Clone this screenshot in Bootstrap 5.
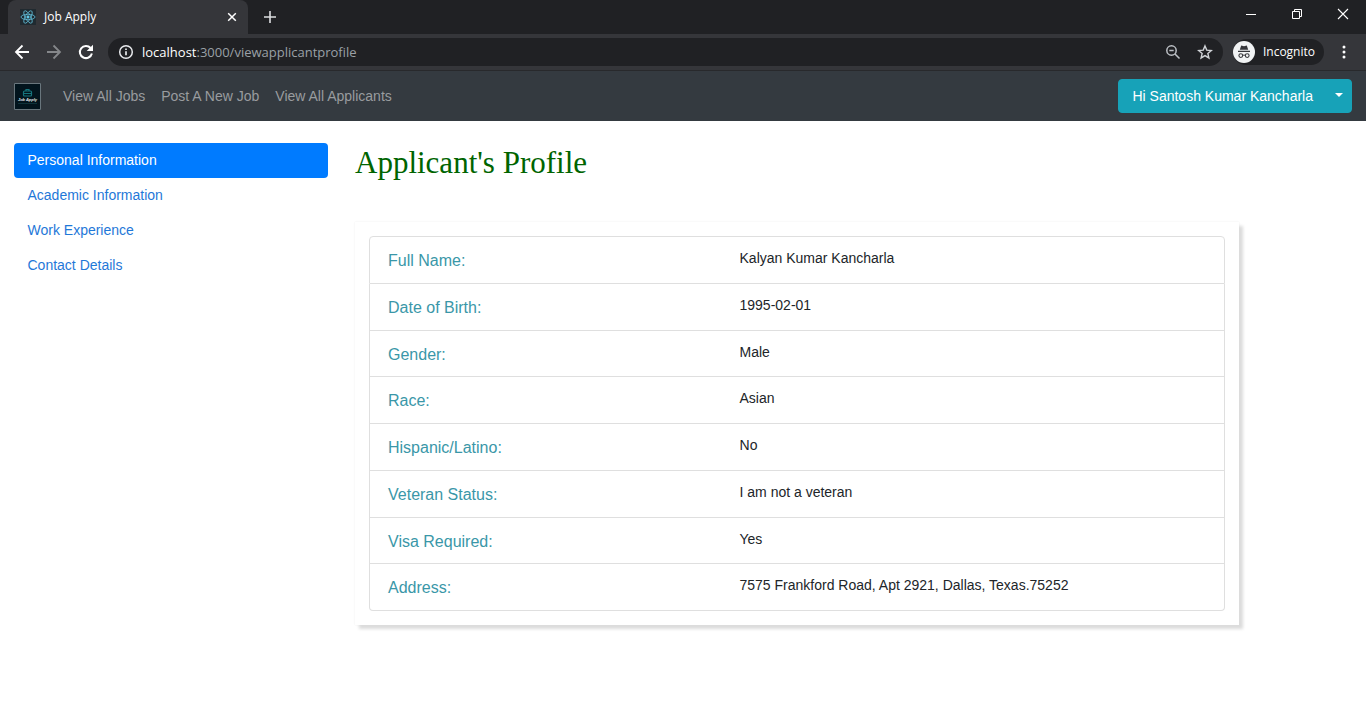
<!DOCTYPE html>
<html lang="en">
<head>
<meta charset="utf-8">
<meta name="viewport" content="width=device-width, initial-scale=1">
<title>Job Apply</title>
<link href="https://cdn.jsdelivr.net/npm/bootstrap@5.3.0/dist/css/bootstrap.min.css" rel="stylesheet">
<style>
  body { font-family: "Liberation Sans", Arial, sans-serif; font-size: 14px; line-height: 21px; color: #212529; background: #fff; }
  svg { display: block; flex: none; }
  .browser button { border: 0; background: none; padding: 0; color: inherit; }

  /* Browser window */
  .browser { font-family: "Open Sans", "Noto Sans", sans-serif; font-size: 12px; line-height: 16px; color: #fff; background: #35363a; border-bottom: 1px solid #28292c; }
  .tab-strip { height: 34px; background: #202124; padding-left: 8px; }
  .page-tab { width: 240px; height: 34px; background: #35363a; border-radius: 8px 8px 0 0; padding: 0 10px 0 12px; }
  .window-buttons { gap: 34px; padding-right: 17px; height: 28px; }
  .toolbar { height: 36px; padding: 0 20px 0 14px; }
  .nav-buttons { gap: 16px; width: 94px; }
  .address-bar { height: 28px; border-radius: 14px; background: #202124; padding: 0 10px; font-size: 13px; }
  .address-bar input { border: 0; outline: 0; background: none; color: #9aa0a6; padding: 0; min-width: 0; }
  .browser .incognito { height: 26px; border-radius: 13px; background: #202124; padding-right: 9px; margin: 0 18px 0 10px; gap: 8px; }

  /* Site navigation */
  .site-bar { --bs-navbar-padding-y: 8px; background: #343a40; min-height: 50px; }
  .site-bar .container-fluid { padding: 0 14px; }
  .site-bar .nav-link { color: #999c9f; padding: 0 8px; }
  .site-bar .navbar-nav { margin-left: 14px; }
  .user-menu { --bs-btn-color: #fff; --bs-btn-bg: #17a2b8; --bs-btn-border-color: #17a2b8; --bs-btn-hover-color: #fff; --bs-btn-hover-bg: #138496; --bs-btn-hover-border-color: #117a8b; --bs-btn-font-size: 14px; --bs-btn-line-height: 22px; --bs-btn-padding-y: 5px; --bs-btn-border-radius: 4px; }
  .user-name { --bs-btn-padding-x: 13px; }
  .user-menu.dropdown-toggle-split { padding: 0 8px; }

  /* Profile page */
  .profile-page { --bs-gutter-x: 27px; padding-bottom: 60px; }
  .profile-page > .row { --bs-gutter-x: 27px; padding-top: 22px; }
  .section-links { --bs-nav-pills-border-radius: 4px; --bs-nav-pills-link-active-bg: #007bff; --bs-nav-link-color: #1f78d8; --bs-nav-link-padding-x: 14px; --bs-nav-link-padding-y: 7px; --bs-nav-link-font-size: 14px; }
  h1 { font-family: Georgia, "Liberation Serif", serif; font-size: 31px; line-height: 40px; color: #006400; margin-bottom: 39px; font-weight: 400; }
  .profile-panel { padding: 14px; box-shadow: 4px 4px 3px #dcdcdc, 0 0 2px #eee; background: #fff; }
  .profile-list { --bs-list-group-border-radius: 4px; --bs-list-group-border-color: #dfdfdf; min-height: 375px; margin: 0; }
  .profile-list .list-group-item { padding: 12px 18px 9px; }
  .profile-list .row { --bs-gutter-x: 26px; }
  .profile-list dt { font-weight: 400; font-size: 16px; line-height: 24px; color: #3a97a8; }
  .profile-list dd { margin: 0; line-height: 19px; }
</style>
</head>
<body>
<header class="browser">
  <div class="tab-strip d-flex align-items-start">
    <div class="page-tab d-flex align-items-center">
      <svg width="16" height="16" viewBox="0 0 16 16" fill="none" stroke="#61bdd8" stroke-width=".8"><path fill="#202a30" stroke="none" d="M0 0h16v16H0z"/><ellipse cx="8" cy="8" rx="7" ry="2.7"/><ellipse cx="8" cy="8" rx="7" ry="2.7" transform="rotate(60 8 8)"/><ellipse cx="8" cy="8" rx="7" ry="2.7" transform="rotate(120 8 8)"/><circle cx="8" cy="8" r="1.2" fill="#61dafb"/></svg>
      <span class="ms-2">Job Apply</span>
      <button class="ms-auto" type="button" aria-label="Close tab"><svg width="12" height="12" viewBox="0 0 12 12" stroke="#fff" stroke-width="1.5"><path d="M2.200 2.200l7.600 7.600M9.800 2.200L2.200 9.800"/></svg></button>
    </div>
    <button class="align-self-center ms-3" type="button" aria-label="New tab"><svg width="12" height="12" viewBox="0 0 12 12" stroke="#dcdee0" stroke-width="1.6"><path d="M6 0v12M0 6h12"/></svg></button>
    <div class="window-buttons d-flex align-items-center ms-auto">
      <button type="button" aria-label="Minimize"><svg width="12" height="12" viewBox="0 0 12 12" stroke="#fff"><path d="M1 6.500h10"/></svg></button>
      <button type="button" aria-label="Restore"><svg width="12" height="12" viewBox="0 0 12 12" fill="none" stroke="#fff"><path d="M1.500 3.500h7v7h-7zM3.500 3.500v-2h7v7h-2"/></svg></button>
      <button type="button" aria-label="Close window"><svg width="12" height="12" viewBox="0 0 12 12" stroke="#fff" stroke-width="1.100"><path d="M1 1l10 10M11 1L1 11"/></svg></button>
    </div>
  </div>
  <div class="toolbar d-flex align-items-center">
    <div class="nav-buttons d-flex align-items-center flex-shrink-0">
      <button type="button" aria-label="Back"><svg width="16" height="16" viewBox="0 0 16 16" fill="none" stroke="#fff" stroke-width="1.800"><path d="M15 8H2.500M8.500 1.500L2 8l6.500 6.500"/></svg></button>
      <button type="button" aria-label="Forward"><svg width="16" height="16" viewBox="0 0 16 16" fill="none" stroke="#85878a" stroke-width="1.800"><path d="M1 8h13M7.500 1.500L14 8l-6.500 6.500"/></svg></button>
      <button type="button" aria-label="Reload"><svg width="16" height="16" viewBox="0 0 16 16" fill="none" stroke="#fff" stroke-width="2"><path d="M13.900 9.500A6.100 6.100 0 1 1 12.600 4"/><path d="M15 .8v6.300H8.700z" fill="#fff" stroke="none"/></svg></button>
    </div>
    <div class="address-bar d-flex align-items-center flex-fill">
      <svg class="me-2" width="16" height="16" viewBox="0 0 16 16" fill="none" stroke="#e8eaed" stroke-width="1.500"><circle cx="8" cy="8" r="6.300"/><path d="M8 7.200v4M8 4.400v1.500" stroke-width="1.700"/></svg>
      <label for="address">localhost</label>
      <input id="address" class="flex-fill" type="text" value=":3000/viewapplicantprofile">
      <button type="button" aria-label="Zoom"><svg width="16" height="16" viewBox="0 0 16 16" fill="none" stroke="#bdc1c6" stroke-width="1.500"><circle cx="6.500" cy="6.500" r="4.700"/><path d="M10 10l4.500 4.500M4.300 6.500h4.400"/></svg></button>
      <button class="ms-3" type="button" aria-label="Bookmark"><svg width="16" height="16" viewBox="0 0 16 16" fill="none" stroke="#d0d3d7" stroke-width="1.400"><path d="M8 1.900l1.750 4.200 4.550.4-3.450 3 1.050 4.450L8 11.600l-3.900 2.350 1.050-4.450-3.450-3 4.550-.4z"/></svg></button>
    </div>
    <button class="incognito d-flex align-items-center flex-shrink-0" type="button">
      <svg width="22" height="22" viewBox="0 0 22 22"><circle cx="11" cy="11" r="11" fill="#f1f3f4"/><path fill="#35363a" d="M8.200 4.500l2.800.7 2.800-.7 1.400 4.300H6.800zM5 9.800h12v1.200H5z"/><g fill="none" stroke="#35363a" stroke-width="1.100"><circle cx="7.800" cy="14.600" r="1.900"/><circle cx="14.200" cy="14.600" r="1.900"/><path d="M9.700 14.400q1.300-.8 2.600 0"/></g></svg>
      Incognito
    </button>
    <button type="button" aria-label="Browser menu"><svg width="4" height="16" viewBox="0 0 4 16" fill="#fff"><circle cx="2" cy="3" r="1.500"/><circle cx="2" cy="8" r="1.500"/><circle cx="2" cy="13" r="1.500"/></svg></button>
  </div>
</header>

<nav class="site-bar navbar navbar-expand">
  <div class="container-fluid">
    <a href="#" class="d-block" aria-label="Home"><svg width="27" height="27" viewBox="0 0 27 27"><path fill="#02141d" stroke="#69767d" stroke-width="1" d="M.5.500h26v26H.5z"/><g fill="none" stroke="#16747c" stroke-width="1.200"><rect x="9.500" y="8" width="8" height="5" rx="1"/><path d="M12 8V6.500h3V8M9.500 10.500h8"/></g><text x="13.500" y="17.500" text-anchor="middle" font-size="4" font-weight="700" font-style="italic" fill="#e6edef">Job Apply</text><path stroke="#17454d" stroke-width=".6" d="M4 20.500h19"/></svg></a>
    <ul class="navbar-nav me-auto">
      <li class="nav-item"><a class="nav-link" href="#">View All Jobs</a></li>
      <li class="nav-item"><a class="nav-link" href="#">Post A New Job</a></li>
      <li class="nav-item"><a class="nav-link" href="#">View All Applicants</a></li>
    </ul>
    <div class="btn-group">
      <button class="btn user-menu user-name" type="button">Hi Santosh Kumar Kancharla</button>
      <button class="btn user-menu dropdown-toggle dropdown-toggle-split" type="button" aria-label="Account menu"></button>
    </div>
  </div>
</nav>

<main class="profile-page container-fluid">
  <div class="row">
    <div class="col-3">
      <ul class="section-links nav nav-pills flex-column">
        <li class="nav-item"><a class="nav-link active" href="#" aria-current="page">Personal Information</a></li>
        <li class="nav-item"><a class="nav-link" href="#">Academic Information</a></li>
        <li class="nav-item"><a class="nav-link" href="#">Work Experience</a></li>
        <li class="nav-item"><a class="nav-link" href="#">Contact Details</a></li>
      </ul>
    </div>
    <div class="col-8">
      <h1>Applicant's Profile</h1>
      <div class="profile-panel">
        <dl class="profile-list list-group">
          <div class="list-group-item flex-fill"><div class="row"><dt class="col-5">Full Name:</dt><dd class="col-7">Kalyan Kumar Kancharla</dd></div></div>
          <div class="list-group-item flex-fill"><div class="row"><dt class="col-5">Date of Birth:</dt><dd class="col-7">1995-02-01</dd></div></div>
          <div class="list-group-item flex-fill"><div class="row"><dt class="col-5">Gender:</dt><dd class="col-7">Male</dd></div></div>
          <div class="list-group-item flex-fill"><div class="row"><dt class="col-5">Race:</dt><dd class="col-7">Asian</dd></div></div>
          <div class="list-group-item flex-fill"><div class="row"><dt class="col-5">Hispanic/Latino:</dt><dd class="col-7">No</dd></div></div>
          <div class="list-group-item flex-fill"><div class="row"><dt class="col-5">Veteran Status:</dt><dd class="col-7">I am not a veteran</dd></div></div>
          <div class="list-group-item flex-fill"><div class="row"><dt class="col-5">Visa Required:</dt><dd class="col-7">Yes</dd></div></div>
          <div class="list-group-item flex-fill"><div class="row"><dt class="col-5">Address:</dt><dd class="col-7">7575 Frankford Road, Apt 2921, Dallas, Texas.75252</dd></div></div>
        </dl>
      </div>
    </div>
  </div>
</main>
<script src="https://cdn.jsdelivr.net/npm/bootstrap@5.3.0/dist/js/bootstrap.bundle.min.js"></script>
</body>
</html>
